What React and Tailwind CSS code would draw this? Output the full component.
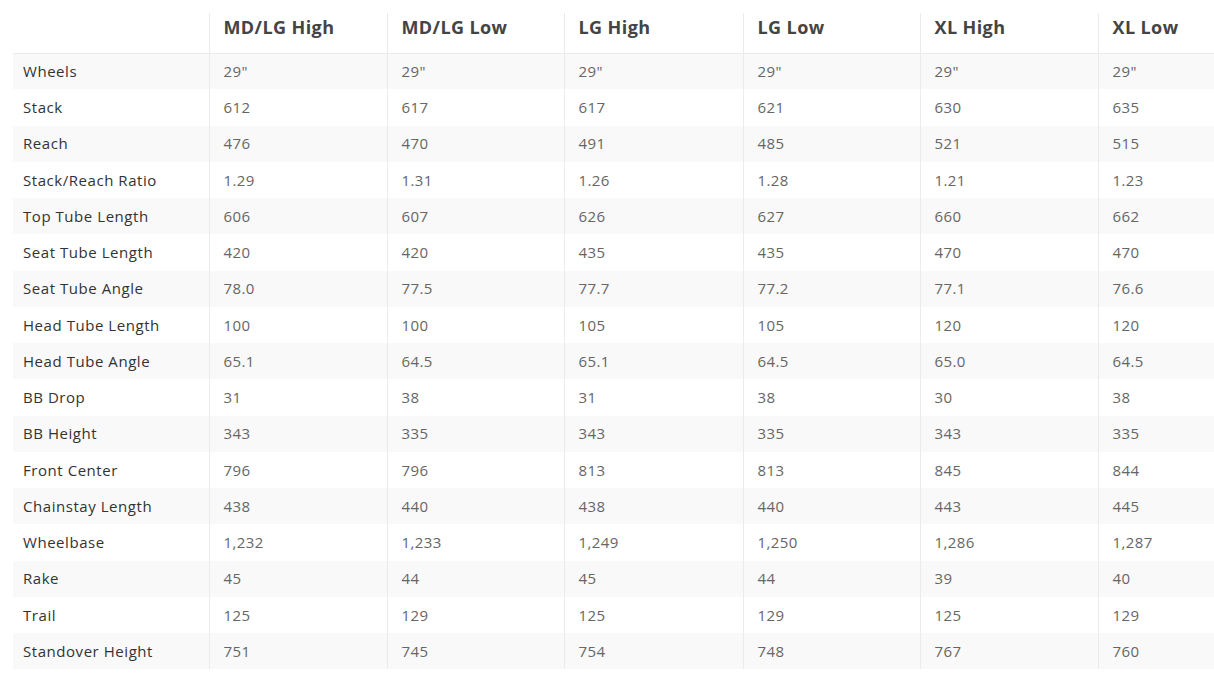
const columns = ["MD/LG High", "MD/LG Low", "LG High", "LG Low", "XL High", "XL Low"];

const widths = ["w-[196px]", "w-[178px]", "w-[177px]", "w-[179px]", "w-[177px]", "w-[178px]", "w-[140px]"];

const rows = [
  ["Wheels", '29"', '29"', '29"', '29"', '29"', '29"'],
  ["Stack", "612", "617", "617", "621", "630", "635"],
  ["Reach", "476", "470", "491", "485", "521", "515"],
  ["Stack/Reach Ratio", "1.29", "1.31", "1.26", "1.28", "1.21", "1.23"],
  ["Top Tube Length", "606", "607", "626", "627", "660", "662"],
  ["Seat Tube Length", "420", "420", "435", "435", "470", "470"],
  ["Seat Tube Angle", "78.0", "77.5", "77.7", "77.2", "77.1", "76.6"],
  ["Head Tube Length", "100", "100", "105", "105", "120", "120"],
  ["Head Tube Angle", "65.1", "64.5", "65.1", "64.5", "65.0", "64.5"],
  ["BB Drop", "31", "38", "31", "38", "30", "38"],
  ["BB Height", "343", "335", "343", "335", "343", "335"],
  ["Front Center", "796", "796", "813", "813", "845", "844"],
  ["Chainstay Length", "438", "440", "438", "440", "443", "445"],
  ["Wheelbase", "1,232", "1,233", "1,249", "1,250", "1,286", "1,287"],
  ["Rake", "45", "44", "45", "44", "39", "40"],
  ["Trail", "125", "129", "125", "129", "125", "129"],
  ["Standover Height", "751", "745", "754", "748", "767", "760"],
];

export default function App() {
  return (
    <div className="w-[1214px] h-[683px] overflow-hidden bg-white pl-[13px] pt-[13px] font-['Open_Sans',sans-serif]">
      <table className="table-fixed border-collapse w-[1225px]">
        <colgroup>
          {widths.map((w, i) => (
            <col key={i} className={w} />
          ))}
        </colgroup>
        <thead>
          <tr className="h-[40px] border-b border-[#ebebeb]">
            <th className="text-left" />
            {columns.map((c) => (
              <th
                key={c}
                className="text-left align-top pt-[1px] pl-[14px] border-l border-[#ebebeb] text-[18px] leading-[27px] font-bold tracking-[0.4px] text-[#444]"
              >
                {c}
              </th>
            ))}
          </tr>
        </thead>
        <tbody>
          {rows.map((r, i) => (
            <tr key={r[0]} className={`h-[36.25px] ${i % 2 === 0 ? "bg-[#f9f9f9]" : "bg-white"}`}>
              <td className="pl-[10px] text-[15px] tracking-[0.55px] text-[#333] whitespace-nowrap">{r[0]}</td>
              {r.slice(1).map((v, j) => (
                <td key={j} className="pl-[14px] border-l border-[#ebebeb] text-[15px] tracking-[0.4px] text-[#666]">
                  {v}
                </td>
              ))}
            </tr>
          ))}
        </tbody>
      </table>
    </div>
  );
}
